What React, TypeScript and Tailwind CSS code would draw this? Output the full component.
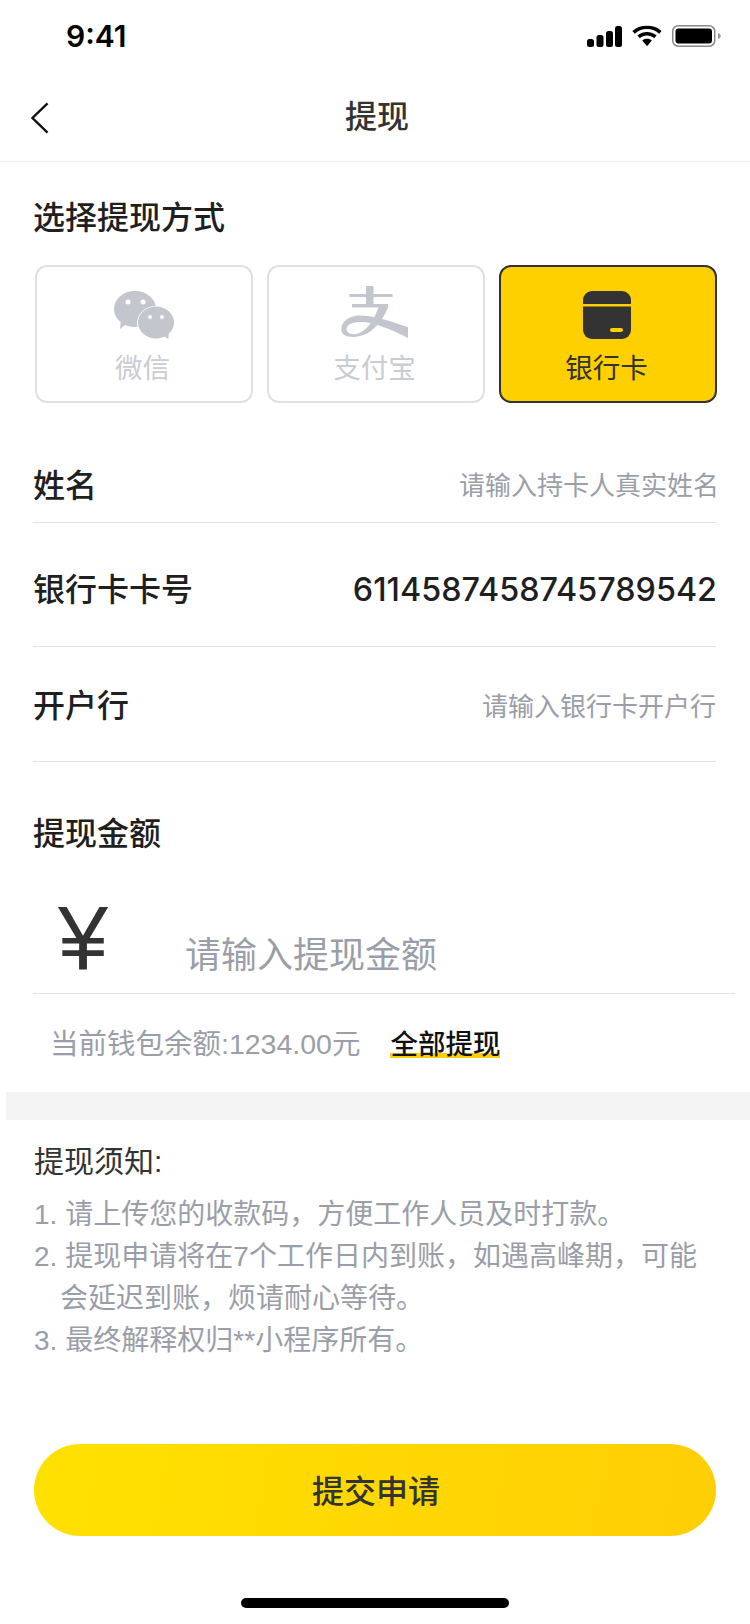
const font = "font-['Liberation_Sans','Noto_Sans_CJK_SC',sans-serif]";

function StatusBar() {
  return (
    <div className="flex h-[72px] items-center justify-between pl-[66px] pr-[29px]">
      <span className="font-['Inter',sans-serif] text-[30px] leading-none font-semibold text-black">9:41</span>
      <div className="flex items-center gap-[10px]">
        <svg width="35" height="21" viewBox="0 0 35 21" fill="#000">
          <rect x="0" y="13" width="7" height="8" rx="2.500" />
          <rect x="9.500" y="9" width="7" height="12" rx="2.500" />
          <rect x="19" y="5" width="7" height="16" rx="2.500" />
          <rect x="28" y="0" width="7" height="21" rx="2.500" />
        </svg>
        <svg width="30" height="22" viewBox="0 0 32 22" fill="#000">
          <path d="M16 3.500c5.400 0 9.600 2 13 5.100l2.600-2.900C27.600 2 22.300 0 16 0S4.400 2 .4 5.700L3 8.600C6.400 5.500 10.600 3.500 16 3.500z" />
          <path d="M16 10.500c3.100 0 5.600 1.100 7.600 2.900l2.600-2.900C23.500 8.100 20.100 6.800 16 6.800s-7.500 1.300-10.200 3.700l2.600 2.900c2-1.800 4.500-2.900 7.600-2.900z" />
          <path d="M16 14c-2.100 0-3.800.7-5.100 1.900L16 22l5.100-6.100C19.800 14.700 18.100 14 16 14z" />
        </svg>
        <svg width="49" height="22" viewBox="0 0 49 22">
          <rect x="0.750" y="0.750" width="42" height="20.500" rx="5.500" fill="none" stroke="#8a8a8a" strokeWidth="1.500" />
          <rect x="3.500" y="3.500" width="36.500" height="15" rx="3" fill="#000" />
          <path d="M46 8v6c1.500-.5 2.800-1.500 2.800-3S47.500 8.500 46 8z" fill="#9a9a9a" />
        </svg>
      </div>
    </div>
  );
}

function WechatIcon() {
  return (
    <svg width="60" height="48" viewBox="0 0 60 48">
      <path d="M6 38l1-9h10z" fill="#c3c6cd" />
      <ellipse cx="21" cy="18" rx="21" ry="18" fill="#c3c6cd" />
      <circle cx="14" cy="11" r="2.500" fill="#fff" />
      <circle cx="29" cy="11" r="2.500" fill="#fff" />
      <ellipse cx="42" cy="32" rx="19" ry="17" fill="#fff" />
      <ellipse cx="42" cy="31.500" rx="18" ry="16" fill="#c3c6cd" />
      <path d="M54.500 48l-7-4 7-2z" fill="#c3c6cd" />
      <circle cx="36" cy="26" r="2" fill="#fff" />
      <circle cx="48" cy="26" r="2" fill="#fff" />
    </svg>
  );
}

function AlipayIcon() {
  return (
    <svg className="-ml-[2px]" width="68" height="53" viewBox="0 0 68 53" fill="#c3c6cd">
      <rect x="8.500" y="8" width="43" height="3" />
      <rect x="25" y="0" width="7.500" height="20" />
      <rect x="11" y="18" width="36" height="3.500" />
      <path d="M38 20h9.500C44 30 36 42 26 47.500 16 52 3 53 .5 45-1 36 8 30 17 29.500c15-.5 31 5.500 50 11.500v11C50 43 32 36 20 36c-8 0-14 2-14.500 7 0 5 6.500 6 11.500 4.500C27 44 34 32 38 20z" />
    </svg>
  );
}

function CardIcon() {
  return (
    <svg className="-ml-[3px]" width="48" height="48" viewBox="0 0 48 48">
      <path d="M9 0h30a9 9 0 0 1 9 9v4H0V9a9 9 0 0 1 9-9z" fill="#333" />
      <path d="M0 15.500h48V39a9 9 0 0 1-9 9H9a9 9 0 0 1-9-9z" fill="#333" />
      <rect x="27" y="37" width="13" height="4" rx="2" fill="#ffd000" />
    </svg>
  );
}

function Method({ label, active, icon }: { label: string; active?: boolean; icon: React.ReactNode }) {
  return (
    <div
      className={
        active
          ? "flex h-[138px] w-[218px] flex-col items-center rounded-[12px] border-2 border-[#333] bg-[#ffd000]"
          : "flex h-[138px] w-[218px] flex-col items-center rounded-[12px] border-2 border-[#e0e1e4] bg-white"
      }
    >
      <div className="flex h-[72px] w-full items-end justify-center">{icon}</div>
      <span className={active ? "mt-[12px] pr-[3px] text-[27.500px] leading-[36px] text-[#333]" : "mt-[12px] pr-[3px] text-[27.500px] leading-[36px] text-[#c9ccd2]"}>
        {label}
      </span>
    </div>
  );
}

export default function App() {
  return (
    <div className={`h-[1624px] w-[750px] overflow-hidden bg-white ${font}`}>
      <StatusBar />
      <div className="relative flex h-[90px] items-center justify-center border-b border-[#eeeeee]">
        <svg className="absolute left-[30px] top-[30px]" width="20" height="32" viewBox="0 0 20 34" fill="none" stroke="#111" strokeWidth="2.500">
          <path d="M18 1.500 2 17l16 15.500" />
        </svg>
        <span className="ml-[4px] text-[32px] leading-none font-medium text-[#333]">提现</span>
      </div>

      <div className="px-[33px] pt-[34px]">
        <div className="text-[32px] leading-[44px] font-medium text-[#1f1f1f]">选择提现方式</div>
        <div className="mt-[25px] flex justify-between pl-[2px]">
          <Method label="微信" icon={<WechatIcon />} />
          <Method label="支付宝" icon={<AlipayIcon />} />
          <Method label="银行卡" active icon={<CardIcon />} />
        </div>
      </div>

      <div className="mt-[21px] pl-[33px] pr-[34px]">
        <div className="flex h-[99px] items-center justify-between border-b border-[#e2e3e6] pt-[26px]">
          <span className="text-[32px] leading-none font-medium text-[#1f1f1f]">姓名</span>
          <span className="-mr-[3px] text-[26px] leading-none text-[#9a9ea8]">请输入持卡人真实姓名</span>
        </div>
        <div className="flex h-[124px] items-center justify-between border-b border-[#e2e3e6] pt-[10px]">
          <span className="text-[32px] leading-none font-medium text-[#1f1f1f]">银行卡卡号</span>
          <span className="-mr-[1px] mt-[1px] font-['Inter',sans-serif] text-[32.300px] leading-none font-medium text-[#1f1f1f]">6114587458745789542</span>
        </div>
        <div className="flex h-[115px] items-center justify-between border-b border-[#e2e3e6] pt-[4px]">
          <span className="text-[32px] leading-none font-medium text-[#1f1f1f]">开户行</span>
          <span className="mt-[2px] text-[26px] leading-none text-[#9a9ea8]">请输入银行卡开户行</span>
        </div>
      </div>

      <div className="pl-[33px] pr-[15px]">
        <div className="pt-[50px] text-[32px] leading-[44px] font-medium text-[#1f1f1f]">提现金额</div>
        <div className="flex h-[138px] items-center border-b border-[#e2e3e6]">
          <span className="ml-[25px] mt-[27px] w-[127px] text-[90px] leading-none text-[#333]">¥</span>
          <span className="mt-[62px] text-[36px] leading-none text-[#9a9ea8]">请输入提现金额</span>
        </div>
      </div>

      <div className="flex h-[98px] items-center pl-[50px]">
        <span className="mt-[2px] text-[28.500px] leading-none text-[#9a9ea8]">当前钱包余额:1234.00元</span>
        <span className="ml-[30px] mt-[7px] border-b-[5px] border-[#ffd000] text-[27.500px] leading-[17px] font-medium text-[#111]">全部提现</span>
      </div>

      <div className="ml-[6px] h-[28px] bg-[#f4f4f4]" />

      <div className="px-[34px] pt-[22px]">
        <div className="text-[30px] leading-[40px] text-[#333]">提现须知:</div>
        <ol className="mt-[12px] text-[28px] leading-[42px] text-[#9a9ea8]">
          <li><span className="mr-[8px]">1.</span>{"请上传您的收款码\uFF0C方便工作人员及时打款。"}</li>
          <li><span className="mr-[8px]">2.</span>{"提现申请将在7个工作日内到账\uFF0C如遇高峰期\uFF0C可能"}</li>
          <li className="pl-[26px]">{"会延迟到账\uFF0C烦请耐心等待。"}</li>
          <li><span className="mr-[8px]">3.</span>最终解释权归**小程序所有。</li>
        </ol>
      </div>

      <div className="mx-[34px] mt-[82px] flex h-[92px] items-center justify-center rounded-full bg-[linear-gradient(100deg,#ffe100,#ffce05)]">
        <span className="ml-[2px] mt-[4px] text-[32px] leading-none font-medium text-[#333]">提交申请</span>
      </div>

      <div className="mx-auto mt-[62px] h-[10px] w-[268px] rounded-full bg-black" />
    </div>
  );
}
